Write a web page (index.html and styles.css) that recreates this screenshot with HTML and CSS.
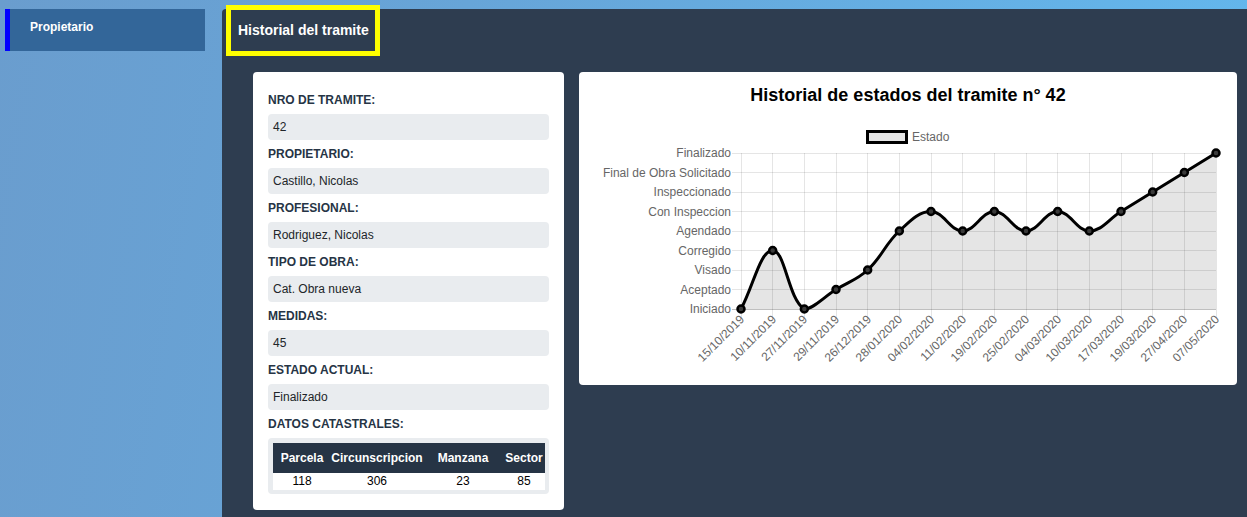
FILE: index.html
```html
<!DOCTYPE html>
<html lang="es">
<head>
<meta charset="utf-8">
<title>Historial del tramite</title>
<link rel="stylesheet" href="styles.css">
</head>
<body>
<div class="layout">
  <aside class="sidebar">
    <div class="menu-item">Propietario</div>
  </aside>
  <main class="main">
    <div class="page-title">Historial del tramite</div>
    <div class="cards">
      <section class="card info">
        <div class="label">NRO DE TRAMITE:</div>
        <div class="field">42</div>
        <div class="label">PROPIETARIO:</div>
        <div class="field">Castillo, Nicolas</div>
        <div class="label">PROFESIONAL:</div>
        <div class="field">Rodriguez, Nicolas</div>
        <div class="label">TIPO DE OBRA:</div>
        <div class="field">Cat. Obra nueva</div>
        <div class="label">MEDIDAS:</div>
        <div class="field">45</div>
        <div class="label">ESTADO ACTUAL:</div>
        <div class="field">Finalizado</div>
        <div class="label">DATOS CATASTRALES:</div>
        <div class="table-wrap">
          <table class="cat-table">
            <colgroup><col class="c1"><col class="c2"><col class="c3"><col class="c4"></colgroup>
            <thead>
              <tr><th>Parcela</th><th>Circunscripcion</th><th>Manzana</th><th>Sector</th></tr>
            </thead>
            <tbody>
              <tr><td>118</td><td>306</td><td>23</td><td>85</td></tr>
            </tbody>
          </table>
        </div>
      </section>
      <section class="card chart-card">
        <div class="chart-title">Historial de estados del tramite n° 42</div>
        <svg class="chart" width="658" height="279" viewBox="579 106 658 279" xmlns="http://www.w3.org/2000/svg">
          <!-- legend -->
          <rect x="867.5" y="131.5" width="39" height="11" fill="#e5e5e5" stroke="#000" stroke-width="3"/>
          <text x="912" y="141" class="tick">Estado</text>
          <!-- horizontal grid -->
          <g stroke="rgba(0,0,0,0.1)" stroke-width="1">
            <line x1="732" y1="153.5" x2="1216" y2="153.5"/>
            <line x1="732" y1="172.5" x2="1216" y2="172.5"/>
            <line x1="732" y1="192.5" x2="1216" y2="192.5"/>
            <line x1="732" y1="211.5" x2="1216" y2="211.5"/>
            <line x1="732" y1="231.5" x2="1216" y2="231.5"/>
            <line x1="732" y1="250.5" x2="1216" y2="250.5"/>
            <line x1="732" y1="270.5" x2="1216" y2="270.5"/>
            <line x1="732" y1="289.5" x2="1216" y2="289.5"/>
          </g>
          <line x1="732" y1="309.5" x2="1216" y2="309.5" stroke="rgba(0,0,0,0.25)" stroke-width="1"/>
          <!-- vertical grid -->
          <g stroke="rgba(0,0,0,0.1)" stroke-width="1">
            <line x1="741.5" y1="153" x2="741.5" y2="318"/>
            <line x1="772.5" y1="153" x2="772.5" y2="318"/>
            <line x1="804.5" y1="153" x2="804.5" y2="318"/>
            <line x1="836.5" y1="153" x2="836.5" y2="318"/>
            <line x1="867.5" y1="153" x2="867.5" y2="318"/>
            <line x1="899.5" y1="153" x2="899.5" y2="318"/>
            <line x1="931.5" y1="153" x2="931.5" y2="318"/>
            <line x1="962.5" y1="153" x2="962.5" y2="318"/>
            <line x1="994.5" y1="153" x2="994.5" y2="318"/>
            <line x1="1026.5" y1="153" x2="1026.5" y2="318"/>
            <line x1="1057.5" y1="153" x2="1057.5" y2="318"/>
            <line x1="1089.5" y1="153" x2="1089.5" y2="318"/>
            <line x1="1121.5" y1="153" x2="1121.5" y2="318"/>
            <line x1="1152.5" y1="153" x2="1152.5" y2="318"/>
            <line x1="1184.5" y1="153" x2="1184.5" y2="318"/>
            <line x1="1216.5" y1="153" x2="1216.5" y2="318"/>
          </g>
          <!-- y labels -->
          <g class="tick" text-anchor="end">
            <text x="731" y="157">Finalizado</text>
            <text x="731" y="176.5">Final de Obra Solicitado</text>
            <text x="731" y="196">Inspeccionado</text>
            <text x="731" y="215.5">Con Inspeccion</text>
            <text x="731" y="235">Agendado</text>
            <text x="731" y="254.5">Corregido</text>
            <text x="731" y="274">Visado</text>
            <text x="731" y="293.5">Aceptado</text>
            <text x="731" y="313">Iniciado</text>
          </g>
          <!-- x labels -->
          <g class="tick" text-anchor="end">
            <text transform="translate(745 320) rotate(-45)">15/10/2019</text>
            <text transform="translate(777 320) rotate(-45)">10/11/2019</text>
            <text transform="translate(808 320) rotate(-45)">27/11/2019</text>
            <text transform="translate(840 320) rotate(-45)">29/11/2019</text>
            <text transform="translate(872 320) rotate(-45)">26/12/2019</text>
            <text transform="translate(903 320) rotate(-45)">28/01/2020</text>
            <text transform="translate(935 320) rotate(-45)">04/02/2020</text>
            <text transform="translate(967 320) rotate(-45)">11/02/2020</text>
            <text transform="translate(998 320) rotate(-45)">19/02/2020</text>
            <text transform="translate(1030 320) rotate(-45)">25/02/2020</text>
            <text transform="translate(1062 320) rotate(-45)">04/03/2020</text>
            <text transform="translate(1093 320) rotate(-45)">10/03/2020</text>
            <text transform="translate(1125 320) rotate(-45)">17/03/2020</text>
            <text transform="translate(1157 320) rotate(-45)">19/03/2020</text>
            <text transform="translate(1188 320) rotate(-45)">27/04/2020</text>
            <text transform="translate(1220 320) rotate(-45)">07/05/2020</text>
          </g>
          <!-- area -->
          <path fill="rgba(0,0,0,0.1)" d="M741,309 C753.67,285.6 760,250.5 772.67,250.5 C785.33,250.5 788.08,298.99 804.33,309 C813.41,309 823.33,297.3 836,289.5 C848.67,281.7 856.89,279.96 867.67,270 C882.22,256.56 884.78,244.44 899.33,231 C910.11,221.04 918.33,211.5 931,211.5 C943.67,211.5 950,231 962.67,231 C975.33,231 981.67,211.5 994.33,211.5 C1007,211.5 1013.33,231 1026,231 C1038.67,231 1045,211.5 1057.67,211.5 C1070.33,211.5 1076.67,231 1089.33,231 C1102,231 1108.33,219.3 1121,211.5 C1133.67,203.7 1140,199.8 1152.67,192 C1165.33,184.2 1171.67,180.3 1184.33,172.5 C1197,164.7 1203.33,160.8 1216,153 L1216,309 Z"/>
          <path fill="none" stroke="#000" stroke-width="3" stroke-linejoin="round" d="M741,309 C753.67,285.6 760,250.5 772.67,250.5 C785.33,250.5 788.08,298.99 804.33,309 C813.41,309 823.33,297.3 836,289.5 C848.67,281.7 856.89,279.96 867.67,270 C882.22,256.56 884.78,244.44 899.33,231 C910.11,221.04 918.33,211.5 931,211.5 C943.67,211.5 950,231 962.67,231 C975.33,231 981.67,211.5 994.33,211.5 C1007,211.5 1013.33,231 1026,231 C1038.67,231 1045,211.5 1057.67,211.5 C1070.33,211.5 1076.67,231 1089.33,231 C1102,231 1108.33,219.3 1121,211.5 C1133.67,203.7 1140,199.8 1152.67,192 C1165.33,184.2 1171.67,180.3 1184.33,172.5 C1197,164.7 1203.33,160.8 1216,153"/>
          <!-- points -->
          <g fill="#3a3a3a" stroke="#000" stroke-width="2.5">
            <circle cx="741" cy="309" r="3.5"/>
            <circle cx="772.67" cy="250.5" r="3.5"/>
            <circle cx="804.33" cy="309" r="3.5"/>
            <circle cx="836" cy="289.5" r="3.5"/>
            <circle cx="867.67" cy="270" r="3.5"/>
            <circle cx="899.33" cy="231" r="3.5"/>
            <circle cx="931" cy="211.5" r="3.5"/>
            <circle cx="962.67" cy="231" r="3.5"/>
            <circle cx="994.33" cy="211.5" r="3.5"/>
            <circle cx="1026" cy="231" r="3.5"/>
            <circle cx="1057.67" cy="211.5" r="3.5"/>
            <circle cx="1089.33" cy="231" r="3.5"/>
            <circle cx="1121" cy="211.5" r="3.5"/>
            <circle cx="1152.67" cy="192" r="3.5"/>
            <circle cx="1184.33" cy="172.5" r="3.5"/>
            <circle cx="1216" cy="153" r="3.5"/>
          </g>
        </svg>
      </section>
    </div>
  </main>
</div>
</body>
</html>
```

FILE: styles.css
```css
* { box-sizing: border-box; }

html, body { height: 100%; }

body {
  margin: 0;
  font-family: "Liberation Sans", Arial, sans-serif;
  background: linear-gradient(100deg, #6a9dce 0%, #67a5d8 35%, #63b8ee 100%);
  overflow: hidden;
}

.layout {
  display: flex;
  padding-top: 9px;
  height: 100%;
}

.sidebar {
  width: 222px;
  flex: none;
  padding-left: 5px;
}

.menu-item {
  width: 200px;
  background: #336699;
  border-left: 5px solid #0000ff;
  color: #fff;
  font-weight: bold;
  font-size: 12px;
  line-height: 14px;
  padding: 11px 20px 17px;
}

.main {
  flex: 1;
  background: #2e3d50;
  border-top-left-radius: 4px;
  min-height: 100%;
}

.page-title {
  display: inline-block;
  margin: -4px 0 0 4px;
  border: 5px solid #ffff00;
  color: #fff;
  font-weight: bold;
  font-size: 14px;
  line-height: 41px;
  padding: 0 6px 0 7px;
}

.cards {
  display: flex;
  align-items: flex-start;
  gap: 15px;
  padding: 0 10px 0 31px;
  margin-top: 16px;
}

.card {
  background: #fff;
  border-radius: 4px;
}

.info {
  width: 311px;
  flex: none;
  padding: 14px 15px 16px;
}

.label {
  color: #263445;
  font-weight: bold;
  font-size: 12px;
  line-height: 14px;
  padding: 7px 0;
}

.field {
  background: #e9ecef;
  border-radius: 4px;
  height: 26px;
  line-height: 26px;
  padding: 0 5px;
  font-size: 12px;
  color: #212529;
}

.table-wrap {
  background: #e9ecef;
  border-radius: 4px;
  padding: 5px 3px 4px 5px;
}

.cat-table {
  border-collapse: collapse;
  table-layout: fixed;
  width: 272px;
  font-size: 12px;
}

.cat-table .c1 { width: 58px; }
.cat-table .c2 { width: 92px; }
.cat-table .c3 { width: 80px; }
.cat-table .c4 { width: 42px; }

.cat-table th {
  background: #263445;
  color: #fff;
  font-weight: bold;
  height: 30px;
  padding: 0;
  text-align: center;
  white-space: nowrap;
}

.cat-table td {
  background: #fff;
  color: #000;
  height: 17px;
  line-height: 17px;
  padding: 0;
  text-align: center;
}

.chart-card {
  flex: 1;
  padding-top: 12px;
}

.chart-title {
  text-align: center;
  font-weight: bold;
  font-size: 18px;
  line-height: 22px;
  color: #000;
}

.chart {
  display: block;
}

.tick {
  font-family: "Liberation Sans", Arial, sans-serif;
  font-size: 12px;
  fill: #666;
}
```
